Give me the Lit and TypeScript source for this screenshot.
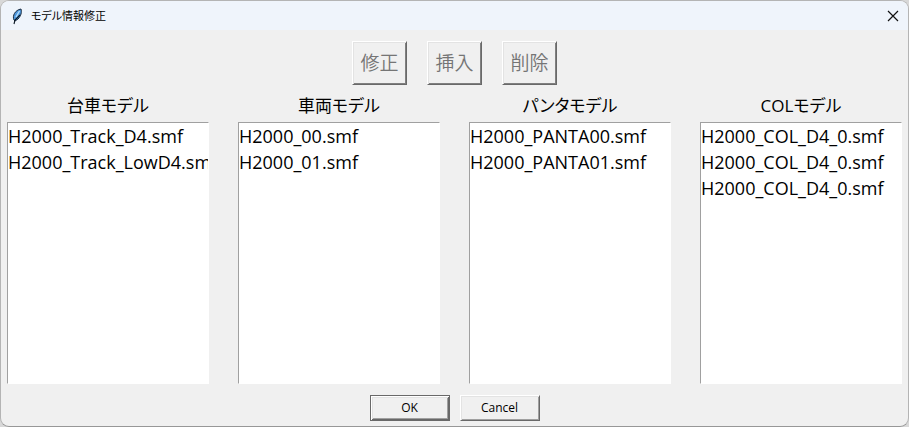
import { LitElement, html, css } from "lit";
import { customElement, property } from "lit/decorators.js";

interface ModelGroup {
  id: string;
  title: string;
  files: string[];
}

const GROUPS: ModelGroup[] = [
  { id: "track", title: "台車モデル", files: ["H2000_Track_D4.smf", "H2000_Track_LowD4.smf"] },
  { id: "body", title: "車両モデル", files: ["H2000_00.smf", "H2000_01.smf"] },
  { id: "panta", title: "パンタモデル", files: ["H2000_PANTA00.smf", "H2000_PANTA01.smf"] },
  { id: "col", title: "COLモデル", files: ["H2000_COL_D4_0.smf", "H2000_COL_D4_0.smf", "H2000_COL_D4_0.smf"] },
];

@customElement("model-list")
export class ModelList extends LitElement {
  @property({ attribute: false }) group!: ModelGroup;

  static styles = css`
    :host {
      display: flex;
      flex-direction: column;
      min-width: 0;
    }
    .title {
      text-align: center;
      font-size: 17px;
      line-height: 26px;
      font-weight: 370;
      padding-bottom: 3px;
    }
    .list {
      flex: 1;
      box-sizing: border-box;
      width: 100%;
      min-height: 0;
      margin: 0;
      padding: 1px 0;
      border: 1px solid #fff;
      border-top-color: #a0a0a0;
      border-left-color: #a0a0a0;
      border-radius: 0;
      outline: none;
      overflow: hidden;
      background: #fff;
      color: #000;
      font: inherit;
      font-size: 18px;
    }
    .item {
      padding: 0;
      font-size: 18px;
      line-height: 26px;
      font-weight: 370;
      min-height: 26px;
      white-space: nowrap;
    }
  `;

  render() {
    return html`
      <label class="title" for=${this.group.id}>${this.group.title}</label>
      <select class="list" id=${this.group.id} size="8">
        ${this.group.files.map((f) => html`<option class="item">${f}</option>`)}
      </select>
    `;
  }
}

@customElement("app-root")
export class AppRoot extends LitElement {
  static styles = css`
    :host {
      display: block;
      background: #d8d8d8;
      font-family: "Open Sans", "Noto Sans CJK JP", sans-serif;
      font-feature-settings: "palt";
      color: #000;
    }
    .window {
      display: flex;
      flex-direction: column;
      box-sizing: border-box;
      min-height: 100vh;
      border: 1px solid #b4b4b4;
      border-bottom-color: #979797;
      border-radius: 9px;
      overflow: hidden;
      background: #f0f0f0;
    }
    .titlebar {
      display: flex;
      align-items: center;
      height: 29px;
      padding: 0 9px;
      background: #eff4fb;
    }
    .feather {
      width: 14px;
      height: 18px;
      margin-right: 7px;
    }
    .caption {
      flex: 1;
      margin: 0;
      font-size: 11px;
      line-height: 18px;
      font-weight: 400;
    }
    .close {
      display: flex;
      padding: 0;
      border: 0;
      background: none;
    }
    .tools {
      display: flex;
      justify-content: center;
      gap: 20px;
      padding: 11px 0 8px;
    }
    button {
      font-family: inherit;
      font-feature-settings: inherit;
    }
    .raised {
      box-sizing: border-box;
      padding: 0;
      border: 1px solid;
      border-color: #fff #696969 #696969 #fff;
      border-radius: 0;
      background: #f0f0f0;
      box-shadow: inset 1px 1px #e3e3e3, inset -1px -1px #a0a0a0;
      color: #000;
    }
    .tool {
      width: 55px;
      height: 44px;
      font-size: 19px;
      line-height: 26px;
      font-weight: 350;
    }
    .tool:disabled {
      color: #757575;
      box-shadow: inset 1px 1px #e3e3e3, inset -1px -1px #808080;
    }
    .lists {
      flex: 1;
      display: grid;
      grid-template-columns: repeat(4, minmax(0, 1fr));
      gap: 29px;
      padding: 0 6px;
    }
    .actions {
      display: flex;
      justify-content: center;
      gap: 10px;
      padding: 11px 0 5px;
    }
    .action {
      width: 80px;
      height: 26px;
      font-size: 12px;
      line-height: 16px;
    }
    .default {
      border-color: #696969;
      box-shadow: inset 1px 1px #fff, inset -1px -1px #696969, inset 2px 2px #e3e3e3,
        inset -2px -2px #a0a0a0;
    }
  `;

  render() {
    return html`
      <main class="window">
        <header class="titlebar">
          <svg class="feather" viewBox="0 0 14 18" aria-hidden="true">
            <path d="M4 13C2 9 5 3 11 2C12 5 11 9 8 12L5 14Z" fill="#4d97dd" stroke="#1b2c40" stroke-width="1" />
            <path d="M9.5 4L6 10" stroke="#b5dcfa" stroke-width="1.4" />
            <path d="M10 8L5 13L4 17" fill="none" stroke="#0b1723" stroke-width="1.1" />
          </svg>
          <h1 class="caption">モデル情報修正</h1>
          <button class="close" aria-label="閉じる">
            <svg width="12" height="12" viewBox="0 0 12 12" aria-hidden="true">
              <path d="M1 1L11 11M11 1L1 11" stroke="#111" stroke-width="1.2" />
            </svg>
          </button>
        </header>
        <div class="tools">
          ${["修正", "挿入", "削除"].map((t) => html`<button class="raised tool" disabled>${t}</button>`)}
        </div>
        <div class="lists">
          ${GROUPS.map((g) => html`<model-list .group=${g}></model-list>`)}
        </div>
        <footer class="actions">
          <button class="raised action default">OK</button>
          <button class="raised action">Cancel</button>
        </footer>
      </main>
    `;
  }
}
